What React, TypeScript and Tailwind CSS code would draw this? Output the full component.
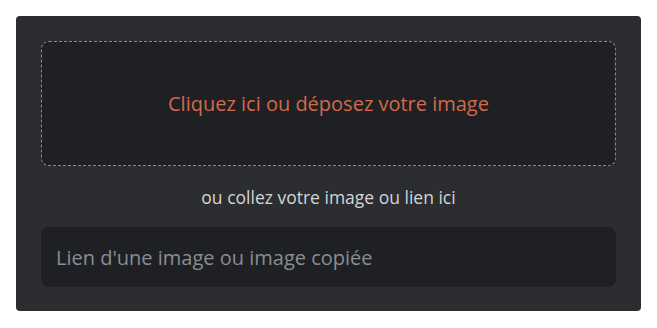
import React, { useState } from "react";

export default function App() {
  const [link, setLink] = useState("");

  return (
    <div className="min-h-screen bg-white p-4 font-['Open_Sans',sans-serif]">
      <div className="flex w-[625px] flex-col rounded-[4px] bg-[#2c2d31] px-[25px] pb-[24px] pt-[25px]">
        {/* Zone de dépôt */}
        <label className="flex h-[125px] cursor-pointer items-center justify-center rounded-[8px] border border-dashed border-[#c8735e] bg-[#1f2023]">
          <input type="file" accept="image/*" className="hidden" />
          <span className="text-[20px] text-[#d4694b]">
            Cliquez ici ou déposez votre image
          </span>
        </label>

        <p className="mt-[19px] text-center text-[17.5px] leading-[24px] text-[#d3d4d6]">
          ou collez votre image ou lien ici
        </p>

        {/* Champ lien */}
        <input
          className="mt-[18px] h-[60px] w-full rounded-[8px] bg-[#1f2023] px-[15px] text-[20px] text-white placeholder:text-[#8a8d92] focus:outline-none"
          type="text"
          placeholder="Lien d'une image ou image copiée"
          value={link}
          onChange={(e) => setLink(e.target.value)}
        />
      </div>
    </div>
  );
}
